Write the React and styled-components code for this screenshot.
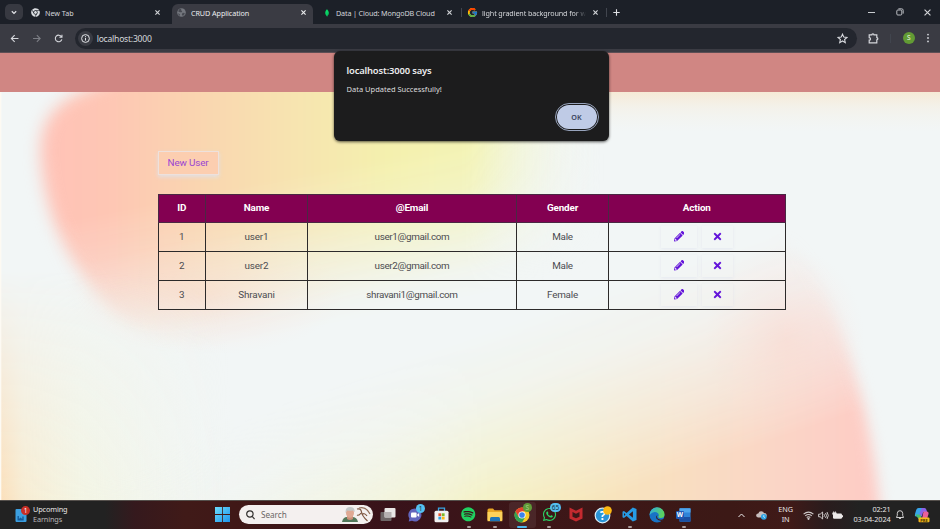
import React from "react";
import styled, { createGlobalStyle, css } from "styled-components";
import { FaPencilAlt, FaTimes, FaChrome, FaSpotify, FaWhatsapp } from "react-icons/fa";
import { FcGoogle } from "react-icons/fc";
import { SiMongodb } from "react-icons/si";
import { VscVscode } from "react-icons/vsc";

const Global = createGlobalStyle`
  * { box-sizing: border-box; }
  html, body { margin: 0; background: #1c1f26; }
  svg { display: block; flex: none; }
`;

const ui = '"Noto Sans", "Open Sans", sans-serif';

const Screen = styled.div`
  position: relative;
  width: 940px;
  height: 529px;
  overflow: hidden;
  display: flex;
  flex-direction: column;
  font-family: ${ui};
`;

/* ---------- browser chrome ---------- */
const TabStrip = styled.div`
  height: 24px;
  display: flex;
  align-items: stretch;
  background: #1c2028;
  color: #d4d6da;
  padding-left: 5px;
`;
const TabSearch = styled.div`
  width: 18px;
  height: 16px;
  margin: 4px 2px 0 0;
  border-radius: 5px;
  background: #373941;
  display: flex;
  align-items: center;
  justify-content: center;
`;
const Tab = styled.div`
  width: ${(p) => p.$w}px;
  margin-top: ${(p) => (p.$active ? 4 : 1)}px;
  padding: 0 ${(p) => p.$end || 6}px 0 ${(p) => p.$pad}px;
  display: flex;
  align-items: center;
  gap: ${(p) => p.$gap || 5}px;
  font-size: 7.2px;
  letter-spacing: ${(p) => p.$ls || 0}px;
  white-space: nowrap;
  ${(p) =>
    p.$active &&
    css`
      background: #3a3b43;
      border-radius: 6px 6px 0 0;
      padding-bottom: 3px;
      color: #eceef0;
    `}
`;
const TabTitle = styled.span`
  flex: 1;
  overflow: hidden;
  ${(p) => p.$fade && css`mask-image: linear-gradient(90deg, #000 93px, transparent 104px);`}
`;
const Divider = styled.div`
  width: 1px;
  height: ${(p) => p.$h || 9}px;
  background: #41454e;
  align-self: center;
`;
const PlusSlot = styled.div`
  width: 19px;
  display: flex;
  align-items: center;
  justify-content: center;
  padding-top: 1px;
`;
const WindowControls = styled.div`
  margin-left: auto;
  display: flex;
  align-items: center;
  gap: 20.5px;
  padding-right: 9px;
`;
const Toolbar = styled.div`
  height: 29px;
  background: #3a3b43;
  display: flex;
  align-items: center;
  padding: 0 10px;
  border-bottom: 1px solid #5d4f55;
`;
const NavButtons = styled.div`
  display: flex;
  gap: 12.6px;
`;
const AddressBar = styled.div`
  margin-left: 11px;
  width: 782px;
  height: 21px;
  margin-top: 1px;
  border-radius: 11px;
  background: #23262e;
  display: flex;
  align-items: center;
  padding: 0 9px 0 3px;
  color: #d5d8dc;
  font-size: 8.6px;
`;
const InfoDisc = styled.div`
  width: 15px;
  height: 15px;
  border-radius: 50%;
  background: #393b43;
  display: flex;
  align-items: center;
  justify-content: center;
  margin-right: 4px;
`;
const Url = styled.span`
  flex: 1;
  letter-spacing: -0.24px;
`;
const ToolbarEnd = styled.div`
  flex: 1;
  display: flex;
  align-items: center;
  justify-content: space-between;
  padding-left: 11px;
  margin-right: 0;
`;
const Avatar = styled.div`
  width: 12px;
  height: 12px;
  margin-left: 1px;
  border-radius: 50%;
  background: #629b34;
  color: #f0f6ea;
  font-size: 6.5px;
  line-height: 12px;
  text-align: center;
`;

/* ---------- alert dialog ---------- */
const Dialog = styled.div`
  position: absolute;
  left: 334px;
  top: 51px;
  width: 274.5px;
  height: 89.5px;
  border-radius: 6px;
  background: #1c1c1d;
  box-shadow: 0 1px 3px rgba(0, 0, 0, 0.65);
  padding: 13px 10px 9px 12.5px;
  display: flex;
  flex-direction: column;
  color: #dcdcdd;
`;
const DialogTitle = styled.div`
  font-size: 9.4px;
  line-height: 14px;
  font-weight: 600;
  color: #ececee;
  letter-spacing: -0.15px;
`;
const DialogText = styled.div`
  margin-top: 5px;
  font-size: 7.5px;
  line-height: 12px;
`;
const OkButton = styled.button`
  margin: auto 2px 3px auto;
  width: 40px;
  height: 24px;
  padding: 0;
  border: 0;
  border-radius: 12px;
  outline: 1.3px solid #97a3bc;
  outline-offset: 1px;
  background: #bfcbe6;
  color: #39445c;
  font: 600 7.2px ${ui};
`;

/* ---------- web page ---------- */
const PageHeader = styled.header`
  height: 39px;
  background: #d08683;
`;
const Page = styled.main`
  height: 408px;
  display: grid;
  overflow: hidden;
  > * { grid-area: 1 / 1; }
`;
const Content = styled.div`
  z-index: 1;
  padding: 59px 0 0 157.5px;
  font-family: Roboto, "Liberation Sans", sans-serif;
`;
const NewUser = styled.a`
  display: flex;
  align-items: center;
  justify-content: center;
  width: 61px;
  height: 24px;
  padding-bottom: 1px;
  margin-bottom: 19px;
  border: 1px solid #eee1dc;
  box-shadow: 0 2px 4px rgba(222, 226, 236, 0.85);
  background: #fcceb0;
  color: #9a45d2;
  font-size: 9.8px;
  letter-spacing: -0.12px;
`;
const Table = styled.table`
  width: 627px;
  table-layout: fixed;
  border-collapse: collapse;
  text-align: center;
  font-size: 9.9px;
  line-height: 12px;
  color: #4c4c50;
`;
const Col = styled.col`
  width: ${(p) => p.$w}px;
`;
const Th = styled.th`
  height: 28px;
  padding: 0 0 1px;
  border: 1px solid #4a2843;
  background: #830051;
  color: #fff;
  font-weight: 700;
  letter-spacing: -0.15px;
`;
const Td = styled.td`
  height: 29px;
  padding: 0 0 1px;
  border: 1px solid #2c2a2a;
  letter-spacing: ${(p) => p.$ls || 0}px;
`;
const Actions = styled.div`
  display: flex;
  justify-content: center;
  gap: 5px;
`;
const IconButton = styled.span`
  width: ${(p) => p.$w}px;
  height: 22px;
  display: flex;
  align-items: center;
  justify-content: center;
  color: #6314da;
  box-shadow: 0 1px 3px rgba(215, 220, 236, 0.45);
`;

/* ---------- taskbar ---------- */
const Taskbar = styled.footer`
  height: 29px;
  border-top: 1px solid #55504c;
  background: linear-gradient(90deg, #222 0, #222 105px, #35191d 135px, #401a18 185px, #401817 235px, #38121a 390px, #3d1618 520px, #3c1916 730px, #401a18 790px, #2a1c1d 825px, #222 860px);
  display: flex;
  align-items: center;
  color: #e8e6e6;
  font-size: 7.3px;
  line-height: 9.6px;
`;
const News = styled.div`
  width: 209.5px;
  padding-left: 14px;
  display: flex;
  align-items: center;
  gap: 3px;
`;
const NewsText = styled.div`
  letter-spacing: -0.12px;
`;
const Muted = styled.div`
  color: #b9b6b6;
`;
const Slot = styled.div`
  width: 26.9px;
  height: 26px;
  padding-bottom: 1px;
  display: flex;
  align-items: center;
  justify-content: center;
  position: relative;
  &::after {
    content: "";
    display: ${(p) => (p.$run ? "block" : "none")};
    position: absolute;
    bottom: 0;
    left: 50%;
    width: ${(p) => (p.$active ? 10 : 4)}px;
    height: 2px;
    border-radius: 1px;
    transform: translateX(-50%);
    background: ${(p) => (p.$active ? "#4cb9f0" : "#a89a9a")};
  }
  ${(p) => p.$active && css`background: rgba(255, 255, 255, 0.07); border-radius: 3px;`}
`;
const Badge = styled.span`
  position: absolute;
  right: ${(p) => p.$r || 2}px;
  top: ${(p) => p.$t || 2}px;
  min-width: 9px;
  height: 9px;
  border-radius: 5px;
  padding: 0 1.5px;
  font-size: 6.5px;
  line-height: 9px;
  text-align: center;
  background: ${(p) => p.$bg};
  color: ${(p) => p.$fg || "#16303f"};
`;
const Search = styled.div`
  width: 134px;
  height: 19px;
  margin: 0 1.5px 1px 2.5px;
  border-radius: 10px;
  background: #f4f0ef;
  color: #6b6665;
  display: flex;
  align-items: center;
  justify-content: space-between;
  padding: 0 1px 0 7px;
  font-size: 8.2px;
`;
const SearchLabel = styled.span`
  flex: 1;
  padding-left: 6px;
`;
const Tray = styled.div`
  flex: 1;
  height: 28px;
  display: flex;
  align-items: center;
  padding-left: 40px;
`;
const TrayText = styled.div`
  width: ${(p) => p.$w}px;
  text-align: ${(p) => p.$align};
  white-space: nowrap;
  letter-spacing: -0.1px;
`;
const TrayIcon = styled.div`
  width: ${(p) => p.$w}px;
  display: flex;
  justify-content: center;
`;

const Close = ({ s = 5, w = 1.1 }) => (
  <svg width={s} height={s} viewBox="0 0 5 5" stroke="currentColor" strokeWidth={w} fill="none">
    <path d="M.4.4l4.2 4.2M4.6.4.4 4.6" />
  </svg>
);

const GradientArt = () => (
  <svg width="940" height="408" viewBox="0 92 940 408">
    <defs>
      <linearGradient id="warm" gradientUnits="userSpaceOnUse" x1="40" x2="600" y1="0" y2="0">
        <stop offset="0" stopColor="#ffc2b7" />
        <stop offset=".12" stopColor="#fec6b4" />
        <stop offset=".27" stopColor="#fad4b0" />
        <stop offset=".44" stopColor="#f7e3b0" />
        <stop offset=".62" stopColor="#f4f0ae" />
        <stop offset=".77" stopColor="#f3f3b4" />
        <stop offset=".86" stopColor="#f2f5d0" stopOpacity=".7" />
        <stop offset="1" stopColor="#f2f5ee" stopOpacity="0" />
      </linearGradient>
      <linearGradient id="fadeDown" gradientUnits="userSpaceOnUse" x1="250" y1="184" x2="280" y2="335">
        <stop offset="0" stopColor="#fff" />
        <stop offset=".28" stopColor="#fff" stopOpacity=".82" />
        <stop offset=".6" stopColor="#fff" stopOpacity=".4" />
        <stop offset=".85" stopColor="#fff" stopOpacity=".08" />
        <stop offset="1" stopColor="#fff" stopOpacity="0" />
      </linearGradient>
      <mask id="m1" maskUnits="userSpaceOnUse" x="0" y="40" width="940" height="500">
        <rect y="40" width="940" height="500" fill="url(#fadeDown)" />
      </mask>
      <linearGradient id="sunset" gradientUnits="userSpaceOnUse" x1="150" x2="880" y1="500" y2="500">
        <stop offset="0" stopColor="#f2f5e4" stopOpacity=".3" />
        <stop offset=".2" stopColor="#f3f4d0" stopOpacity=".8" />
        <stop offset=".46" stopColor="#f5f0b6" />
        <stop offset=".66" stopColor="#f8e2be" />
        <stop offset=".85" stopColor="#fad6c6" />
        <stop offset="1" stopColor="#fecbc5" />
      </linearGradient>
      <linearGradient id="fadeUp" gradientUnits="userSpaceOnUse" x1="505" y1="325" x2="572" y2="520">
        <stop offset="0" stopColor="#fff" stopOpacity="0" />
        <stop offset=".3" stopColor="#fff" stopOpacity=".15" />
        <stop offset=".65" stopColor="#fff" stopOpacity=".56" />
        <stop offset=".95" stopColor="#fff" />
      </linearGradient>
      <mask id="m2" maskUnits="userSpaceOnUse" x="0" y="40" width="1000" height="600">
        <rect y="40" width="1000" height="600" fill="url(#fadeUp)" />
      </mask>
      <radialGradient id="blush">
        <stop offset="0" stopColor="#fcd5cd" stopOpacity=".45" />
        <stop offset="1" stopColor="#fbe0da" stopOpacity="0" />
      </radialGradient>
      <linearGradient id="leftGlow">
        <stop offset="0" stopColor="#fbdfba" />
        <stop offset=".1" stopColor="#f7ecd2" />
        <stop offset=".35" stopColor="#f3f4e0" stopOpacity=".85" />
        <stop offset="1" stopColor="#f2f6e8" stopOpacity="0" />
      </linearGradient>
      <linearGradient id="down" x2="0" y2="1">
        <stop offset="0" stopColor="#fff" stopOpacity="0" />
        <stop offset="1" stopColor="#fff" />
      </linearGradient>
      <mask id="m3" maskUnits="userSpaceOnUse" x="0" y="270" width="240" height="230">
        <rect y="270" width="240" height="230" fill="url(#down)" />
      </mask>
      <linearGradient id="topGlow" x2="0" y2="1">
        <stop offset="0" stopColor="#f6ead6" />
        <stop offset=".4" stopColor="#f4f0e6" stopOpacity=".7" />
        <stop offset="1" stopColor="#f3f4ee" stopOpacity="0" />
      </linearGradient>
      <filter id="b1" x="-20%" y="-20%" width="140%" height="140%" colorInterpolationFilters="sRGB"><feGaussianBlur stdDeviation="8" /></filter>
      <filter id="b2" x="-20%" y="-20%" width="140%" height="140%" colorInterpolationFilters="sRGB"><feGaussianBlur stdDeviation="7" /></filter>
    </defs>
    <rect y="92" width="940" height="408" fill="#f2f6f6" />
    <rect x="520" y="92" width="420" height="40" fill="url(#topGlow)" />
    <ellipse cx="205" cy="295" rx="140" ry="60" fill="url(#blush)" />
    <g mask="url(#m1)">
      <path filter="url(#b1)" fill="url(#warm)" d="M90 88C55 102 38 120 41 160C46 215 65 260 110 310C180 375 400 380 640 360V40H170C140 60 120 78 90 88Z" />
    </g>
    <ellipse cx="785" cy="340" rx="80" ry="95" fill="url(#blush)" />
    <g mask="url(#m2)">
      <path filter="url(#b2)" fill="url(#sunset)" d="M60 560C100 400 500 200 780 225C840 300 875 400 884 560Z" />
    </g>
    <rect y="270" width="230" height="230" fill="url(#leftGlow)" mask="url(#m3)" />
    <rect y="92" width="1.3" height="408" fill="#fdfaf3" />
  </svg>
);

const rows = [
  { id: 1, name: "user1", email: "user1@gmail.com", gender: "Male" },
  { id: 2, name: "user2", email: "user2@gmail.com", gender: "Male" },
  { id: 3, name: "Shravani", email: "shravani1@gmail.com", gender: "Female" },
];

export default function App() {
  return (
    <Screen>
      <Global />
      <TabStrip>
        <TabSearch>
          <svg width="6" height="5" viewBox="0 0 6 5" fill="none" stroke="#e4e6ea" strokeWidth="1.2"><path d="M.8 1.3 3 3.4 5.2 1.3" /></svg>
        </TabSearch>
        <Tab $w={147} $pad={6} $end={12} $ls={-0.03}>
          <FaChrome size={9} color="#d9dce0" />
          <TabTitle>New Tab</TabTitle>
          <Close />
        </Tab>
        <Tab $w={141} $pad={5} $end={7} $ls={-0.07} $active>
          <svg width="9" height="9" viewBox="0 0 9 9">
            <circle cx="4.5" cy="4.5" r="4.3" fill="#74777e" />
            <path d="M2 1.2 4.3.8 4 2.2 5.2 3 4.7 4.2 2.8 4.3 1.2 3.5ZM5.8 4.7l2 .2-.8 2.3-1.5.5-.7-1.5ZM1 5.2l1.8.8.2 1.8-1.2-.6Z" fill="#474951" />
          </svg>
          <TabTitle>CRUD Application</TabTitle>
          <Close />
        </Tab>
        <Tab $w={148} $pad={10} $end={9} $ls={-0.14}>
          <SiMongodb size={8} color="#08d967" />
          <TabTitle>Data | Cloud: MongoDB Cloud</TabTitle>
          <Close />
        </Tab>
        <Divider />
        <Tab $w={144} $pad={5} $end={8} $gap={4} $ls={-0.11}>
          <FcGoogle size={11} />
          <TabTitle $fade>light gradient background for w</TabTitle>
          <Close />
        </Tab>
        <Divider />
        <PlusSlot>
          <svg width="7" height="7" viewBox="0 0 7 7" stroke="#dfe1e5" strokeWidth="1.1"><path d="M3.5.3v6.4M.3 3.5h6.4" /></svg>
        </PlusSlot>
        <WindowControls>
          <svg width="7" height="7" viewBox="0 0 7 7" stroke="#c9ccd0"><path d="M0 3.5h7" /></svg>
          <svg width="8" height="8" viewBox="0 0 8 8" fill="none" stroke="#c9ccd0" strokeWidth=".9"><rect x=".8" y="2" width="5" height="5" rx="1" /><path d="M2.4.8h3.2q1.6 0 1.6 1.6v3.2" /></svg>
          <Close s={7} w={0.8} />
        </WindowControls>
      </TabStrip>

      <Toolbar>
        <NavButtons>
          <svg width="9.5" height="9" viewBox="0 0 9 9" fill="none" stroke="#d5d7dc" strokeWidth="1.1"><path d="M8.2 4.5H1.2M4.4 1.2 1.1 4.5l3.3 3.3" /></svg>
          <svg width="9.5" height="9" viewBox="0 0 9 9" fill="none" stroke="#7b7d84" strokeWidth="1.1"><path d="M.8 4.5h7M4.6 1.2l3.3 3.3-3.3 3.3" /></svg>
          <svg width="9.5" height="9" viewBox="0 0 9 9" fill="none" stroke="#d5d7dc" strokeWidth="1.1"><path d="M7.6 5.3A3.3 3.3 0 1 1 7.2 2.7M7.7.7v2.6H5.1" /></svg>
        </NavButtons>
        <AddressBar>
          <InfoDisc>
            <svg width="9" height="9" viewBox="0 0 9 9" fill="none" stroke="#e1e3e7"><circle cx="4.5" cy="4.5" r="3.9" /><path d="M4.5 4v2.6M4.5 2.2v1" /></svg>
          </InfoDisc>
          <Url>localhost:3000</Url>
          <svg width="11" height="11" viewBox="0 0 11 11" fill="none" stroke="#d8dadf" strokeWidth="1.1"><path d="m5.5 1.2 1.3 2.9 3.2.3L7.6 6.5l.7 3.2-2.8-1.7-2.8 1.7.7-3.2L1 4.400l3.200-.3Z" /></svg>
        </AddressBar>
        <ToolbarEnd>
          <svg width="11" height="11" viewBox="0 0 11 11" fill="none" stroke="#d5d7dc" strokeWidth="1.2"><path d="M1.2 1.9h2.6a1.1 1.1 0 0 1 2.2 0h2.8v2.8a1 1 0 0 1 0 2.1v3H1.2V7.2a1.3 1.3 0 0 0 0-2.6Z" /></svg>
          <Divider />
          <Avatar>S</Avatar>
          <svg width="4" height="10" viewBox="1 0 4 10" fill="#d5d7dc"><circle cx="3" cy="1.6" r=".9" /><circle cx="3" cy="5" r=".9" /><circle cx="3" cy="8.4" r=".9" /></svg>
        </ToolbarEnd>
      </Toolbar>

      <PageHeader />
      <Page>
        <GradientArt />
        <Content>
          <NewUser>New User</NewUser>
          <Table>
            <colgroup>
              <Col $w={47.5} /><Col $w={102} /><Col $w={209} /><Col $w={92} /><Col $w={176.5} />
            </colgroup>
            <thead>
              <tr><Th>ID</Th><Th>Name</Th><Th>@Email</Th><Th>Gender</Th><Th>Action</Th></tr>
            </thead>
            <tbody>
              {rows.map((r) => (
                <tr key={r.id}>
                  <Td>{r.id}</Td>
                  <Td $ls={-0.15}>{r.name}</Td>
                  <Td $ls={-0.34}>{r.email}</Td>
                  <Td $ls={-0.25}>{r.gender}</Td>
                  <Td>
                    <Actions>
                      <IconButton $w={36}><FaPencilAlt size={10.5} /></IconButton>
                      <IconButton $w={31}><FaTimes size={11} /></IconButton>
                    </Actions>
                  </Td>
                </tr>
              ))}
            </tbody>
          </Table>
        </Content>
      </Page>

      <Taskbar>
        <News>
          <svg width="16" height="18" viewBox="0 0 16 18">
            <rect x="1.5" y="3" width="11" height="13" rx="1" fill="#3c9fe0" />
            <path d="M3.5 14.5V10h1.4v3l1.6-1.5 1.8 1.5V10.5h1.4v4Z" fill="#145a9a" />
            <circle cx="11.5" cy="4.6" r="4.5" fill="#c92f27" />
            <text x="11.5" y="7" fontSize="6.5" fill="#fff" textAnchor="middle">1</text>
          </svg>
          <NewsText>Upcoming<Muted>Earnings</Muted></NewsText>
        </News>
        <Slot>
          <svg width="15" height="15" viewBox="0 0 15 15"><defs><linearGradient id="win" x2="1" y2="1"><stop stopColor="#6bdcfb" /><stop offset="1" stopColor="#1e95ec" /></linearGradient></defs><path fill="url(#win)" d="M0 0h7.1v7.1H0ZM7.9 0H15v7.1H7.9ZM0 7.9h7.1V15H0ZM7.9 7.9H15V15H7.9Z" /></svg>
        </Slot>
        <Search>
          <svg width="9" height="10" viewBox="0 0 9 10" fill="none" stroke="#33302f" strokeWidth="1.2"><circle cx="3.9" cy="4" r="3.2" /><path d="m6.2 6.4 2.4 2.7" /></svg>
          <SearchLabel>Search</SearchLabel>
          <svg width="31" height="17" viewBox="0 0 31 17">
            <path d="M1 16q1-5 5-5h5q5 0 6 5Z" fill="#53785a" />
            <path d="M6 9h6v4q-3 2-6 0Z" fill="#c98f78" />
            <ellipse cx="9" cy="7" rx="4" ry="4.8" fill="#dfa994" />
            <path d="M4.6 7Q4 1 9 1t4.7 5L12 4.5Q8 5 6 4.4Z" fill="#c3c8c8" />
            <path d="M16 3q4-1 4.500 3t6 9M20 7q-2 3-4 2M21 9q2-3 5 1" fill="none" stroke="#7d5641" strokeWidth="1.2" />
            <path d="M18 2q7-2 11 6" fill="none" stroke="#8e6a55" strokeWidth="1.2" />
          </svg>
        </Search>
        <Slot>
          <svg width="16" height="15" viewBox="0 0 16 15"><rect x=".5" y="5" width="11" height="9" rx="1" fill="#6e6667" /><rect x="4.5" y="1" width="11" height="9.5" rx="1" fill="#e9e7e7" /><path d="M4.5 5h7v5.5h-7Z" fill="#b5b0b1" /></svg>
        </Slot>
        <Slot>
          <svg width="14" height="14" viewBox="0 0 14 14"><path d="M7 .5a6.500 6.500 0 1 1-3 12.300L.7 13.500l.7-3A6.500 6.500 0 0 1 7 .5Z" fill="#6265bd" /><rect x="3" y="4.4" width="5.6" height="5.2" rx="1" fill="#fff" /><path d="m9.200 6.400 2-1.400v4l-2-1.400Z" fill="#fff" /></svg>
          <Badge $bg="#55c1f1" $r={3}>1</Badge>
        </Slot>
        <Slot>
          <svg width="15" height="16" viewBox="0 0 15 16"><path d="M4.5 4V1.2h6V4" fill="none" stroke="#38a5e4" strokeWidth="1.3" /><rect x=".5" y="3.8" width="14" height="11.4" rx="1.5" fill="#f2f0f0" /><path d="M4.4 6.3h2.8v2.8H4.4Z" fill="#e9532c" /><path d="M7.8 6.3h2.8v2.8H7.8Z" fill="#7bb928" /><path d="M4.4 9.7h2.8v2.8H4.4Z" fill="#2ea3e6" /><path d="M7.8 9.7h2.8v2.8H7.8Z" fill="#fdb813" /></svg>
        </Slot>
        <Slot $run><FaSpotify size={14.5} color="#20d060" /></Slot>
        <Slot $run>
          <svg width="16" height="14" viewBox="0 0 16 14"><path d="M.5 2q0-1.500 1.500-1.500h4l1.500 1.800h6.500q1.300 0 1.300 1.200V12H.5Z" fill="#e8a724" /><path d="M.5 4h14.800v9.200H.5Z" fill="#fcd15a" /><path d="M3 13.2V10.5q0-1.500 1.500-1.500h7q1.500 0 1.500 1.500v2.700Z" fill="#1d75b8" /></svg>
        </Slot>
        <Slot $run $active>
          <svg width="16" height="16" viewBox="0 0 16 16"><circle cx="8" cy="8" r="7.5" fill="#f8c927" /><path d="M1.5 4.25A7.5 7.5 0 0 0 8 15.5l3.300-5.600-6.600 0Z" fill="#31a353" /><path d="M4.7 9.9 1.5 4.25A7.5 7.5 0 0 1 14.5 4.25H8Z" fill="#e4402e" /><circle cx="8" cy="8" r="3.6" fill="#fff" /><circle cx="8" cy="8" r="2.8" fill="#3b82ec" /></svg>
          <Badge $bg="#609b38" $fg="#a8cf83" $r={4} $t={1}>S</Badge>
        </Slot>
        <Slot $run><FaWhatsapp size={15} color="#2bd366" /><Badge $bg="#55bff0" $r={2} $t={1}>65</Badge></Slot>
        <Slot>
          <svg width="14" height="15" viewBox="0 0 14 15"><path d="M.5.5 7 3.700 13.500.5v11L7 14.500.5 11.500ZM3.500 4.900v4.800L7 11.300l3.500-1.600V4.900L7 6.700Z" fill="#c42a2f" fillRule="evenodd" /></svg>
        </Slot>
        <Slot>
          <svg width="18" height="18" viewBox="0 0 18 18"><circle cx="8.5" cy="9.5" r="7.3" fill="#2a94d6" stroke="#d9eefa" strokeWidth="1.2" /><text x="8.5" y="14" fontSize="12" fontWeight="700" fill="#fff" textAnchor="middle">?</text><circle cx="13.5" cy="4.5" r="4.3" fill="#fcb813" /></svg>
        </Slot>
        <Slot $run>
          <svg width="15" height="15" viewBox="0 0 15 15"><path d="M10.800.4 14.500 2v11l-3.700 1.600L4.600 8.900 1.900 11 .5 10.300V4.700L1.900 4l2.700 2.100ZM10.900 4.300 6.900 7.500l4 3.200ZM2 5.900v3.200l1.500-1.600Z" fill="#279be4" fillRule="evenodd" /></svg>
        </Slot>
        <Slot>
          <svg width="16" height="16" viewBox="0 0 16 16"><defs><linearGradient id="edge" x2="1" y2=".3"><stop stopColor="#2ea9e5" /><stop offset="1" stopColor="#5bd35e" /></linearGradient></defs><circle cx="8" cy="8" r="7.5" fill="#1873c6" /><path d="M.5 8A7.500 7.500 0 0 1 15.500 7.500Q15.500 11 11.500 11 9 11 9.300 9.500 10.500 8 9 6.300 5 3 .5 8Z" fill="url(#edge)" /><path d="M8.200 8q-1 4 2.800 4.600 2 .2 3.600-.6-.5 1.200-1.600 1.900Q9 14 7.400 11.500 6.500 9.500 8.200 8Z" fill="#401a18" /></svg>
        </Slot>
        <Slot $run>
          <svg width="15" height="14" viewBox="0 0 15 14"><rect x="3.5" y=".3" width="11" height="13.4" rx="1" fill="#2f83d8" /><path d="M3.5.3h11v4.200h-11Z" fill="#4fa5ec" /><path d="M3.500 9h11v4.700h-11Z" fill="#1a4fa3" /><rect y="3" width="8" height="8" rx="1" fill="#1f57b5" /><text x="4" y="9.4" fontSize="6.5" fontWeight="700" fill="#fff" textAnchor="middle">W</text></svg>
        </Slot>

        <Tray>
          <TrayIcon $w={9}><svg width="7" height="5" viewBox="0 0 7 5" fill="none" stroke="#eee"><path d="M.5 4 3.5 1l3 3" /></svg></TrayIcon>
          <TrayIcon $w={30.5}><svg width="11" height="10" viewBox="0 0 11 10"><path d="M2 7.500a2 2 0 0 1 .3-4A3 3 0 0 1 8 3.200 2.200 2.200 0 0 1 9 7.500Z" fill="#c8bebe" /><circle cx="7.8" cy="6.8" r="2.9" fill="#2fa3e3" /><path d="M7.800 5.200v1.800l1 .7" stroke="#fff" strokeWidth=".7" fill="none" /></svg></TrayIcon>
          <TrayText $w={18} $align="center">ENG<br />IN</TrayText>
          <TrayIcon $w={27}><svg width="11" height="9" viewBox="0 0 11 9" fill="none" stroke="#cfcaca" strokeWidth="1.1"><path d="M.6 3.200Q5.500-1 10.400 3.200M2.200 4.900Q5.500 2.200 8.800 4.900M3.700 6.500Q5.500 5.100 7.300 6.500" /><circle cx="5.5" cy="7.8" r=".6" fill="#eee" /></svg></TrayIcon>
          <TrayIcon $w={3}><svg width="11" height="9" viewBox="0 0 11 9" fill="none" stroke="#ddd9d9" strokeWidth=".9"><path d="M.6 3.200h1.600L4.600 1v7L2.200 5.800H.6ZM6 3.200q1 1.300 0 2.600M7.500 2q2 2.500 0 5M9 1q2.600 3.500 0 7" /></svg></TrayIcon>
          <TrayIcon $w={26}><svg width="11" height="9" viewBox="0 0 11 9"><rect x="1" y="2.6" width="9" height="5.2" rx="1.2" fill="#ece9e9" /><path d="M10 4.200h1v2h-1Z" fill="#ece9e9" /><path d="M1.600.4v1.400M3.400.4v1.400M.8 1.800h3.400v1.600H.8Z" stroke="#ece9e9" strokeWidth=".8" fill="#ece9e9" /></svg></TrayIcon>
          <TrayText $w={40} $align="right">02:21<br />03-04-2024</TrayText>
          <TrayIcon $w={19}><svg width="8" height="10" viewBox="0 0 8 10" fill="none" stroke="#e4e2e2" strokeWidth=".9"><path d="M4 .7a2.700 2.700 0 0 0-2.700 2.700v2L.5 7.500h7L6.700 5.400v-2A2.700 2.700 0 0 0 4 .7ZM3 8q1 1.800 2 0" /></svg></TrayIcon>
          <TrayIcon $w={25}>
            <svg width="16" height="16" viewBox="0 0 16 16">
              <path d="M4.500 1h4.500L6.500 9.500H2Q.3 9.500 1 7l1.200-4Q2.800 1 4.500 1Z" fill="#37a5ea" />
              <path d="M8 1h2.500q1.500 0 2 2l.7 2H9.200L7.700 9.500H4.500L7 2.500Z" fill="#8b62e8" />
              <path d="M9.500 4.500h3q2.500 0 2 2.500L13 12H8Z" fill="#ea5f9b" />
              <path d="M1.300 7.500h5L8 12H5.500Q4 12 3.500 10.500Z" fill="#49bd72" />
              <rect x="4.5" y="10.5" width="11" height="4.8" rx="1" fill="#f4b61d" />
              <text x="10" y="14.5" fontSize="4" fontWeight="700" fill="#493500" textAnchor="middle">PRE</text>
            </svg>
          </TrayIcon>
        </Tray>
      </Taskbar>

      <Dialog role="alertdialog">
        <DialogTitle>localhost:3000 says</DialogTitle>
        <DialogText>Data Updated Successfully!</DialogText>
        <OkButton>OK</OkButton>
      </Dialog>
    </Screen>
  );
}
